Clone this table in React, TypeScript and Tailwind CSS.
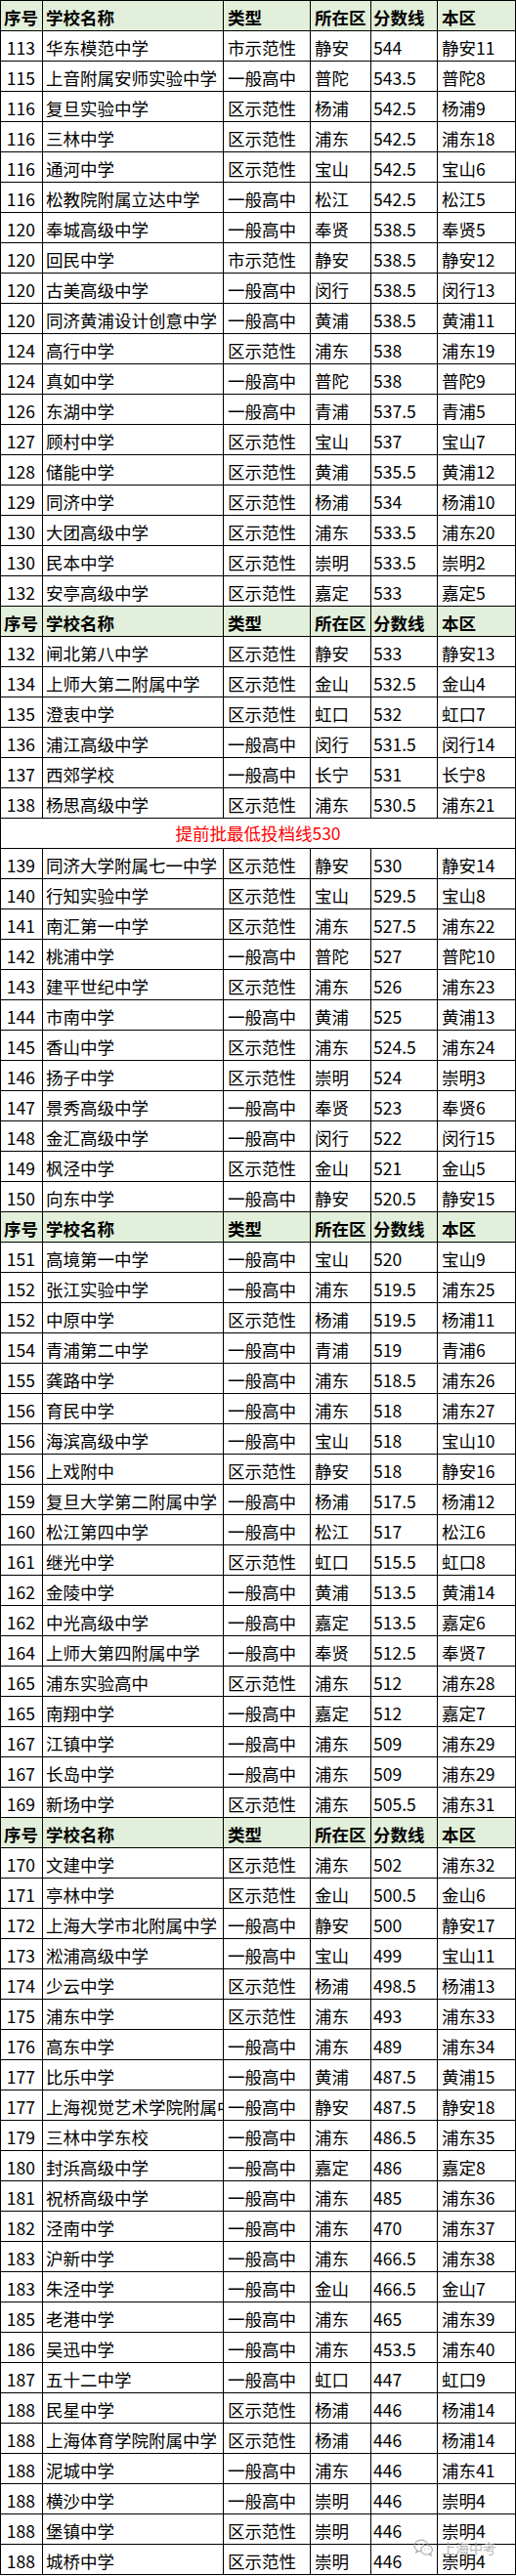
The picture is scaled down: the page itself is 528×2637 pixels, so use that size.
type Row = string[] | "H" | "B";

const rows: Row[] = [
  "H",
  ["113", "华东模范中学", "市示范性", "静安", "544", "静安11"],
  ["115", "上音附属安师实验中学", "一般高中", "普陀", "543.5", "普陀8"],
  ["116", "复旦实验中学", "区示范性", "杨浦", "542.5", "杨浦9"],
  ["116", "三林中学", "区示范性", "浦东", "542.5", "浦东18"],
  ["116", "通河中学", "区示范性", "宝山", "542.5", "宝山6"],
  ["116", "松教院附属立达中学", "一般高中", "松江", "542.5", "松江5"],
  ["120", "奉城高级中学", "一般高中", "奉贤", "538.5", "奉贤5"],
  ["120", "回民中学", "市示范性", "静安", "538.5", "静安12"],
  ["120", "古美高级中学", "一般高中", "闵行", "538.5", "闵行13"],
  ["120", "同济黄浦设计创意中学", "一般高中", "黄浦", "538.5", "黄浦11"],
  ["124", "高行中学", "区示范性", "浦东", "538", "浦东19"],
  ["124", "真如中学", "一般高中", "普陀", "538", "普陀9"],
  ["126", "东湖中学", "一般高中", "青浦", "537.5", "青浦5"],
  ["127", "顾村中学", "区示范性", "宝山", "537", "宝山7"],
  ["128", "储能中学", "区示范性", "黄浦", "535.5", "黄浦12"],
  ["129", "同济中学", "区示范性", "杨浦", "534", "杨浦10"],
  ["130", "大团高级中学", "区示范性", "浦东", "533.5", "浦东20"],
  ["130", "民本中学", "区示范性", "崇明", "533.5", "崇明2"],
  ["132", "安亭高级中学", "区示范性", "嘉定", "533", "嘉定5"],
  "H",
  ["132", "闸北第八中学", "区示范性", "静安", "533", "静安13"],
  ["134", "上师大第二附属中学", "区示范性", "金山", "532.5", "金山4"],
  ["135", "澄衷中学", "区示范性", "虹口", "532", "虹口7"],
  ["136", "浦江高级中学", "一般高中", "闵行", "531.5", "闵行14"],
  ["137", "西郊学校", "一般高中", "长宁", "531", "长宁8"],
  ["138", "杨思高级中学", "区示范性", "浦东", "530.5", "浦东21"],
  "B",
  ["139", "同济大学附属七一中学", "区示范性", "静安", "530", "静安14"],
  ["140", "行知实验中学", "区示范性", "宝山", "529.5", "宝山8"],
  ["141", "南汇第一中学", "区示范性", "浦东", "527.5", "浦东22"],
  ["142", "桃浦中学", "一般高中", "普陀", "527", "普陀10"],
  ["143", "建平世纪中学", "区示范性", "浦东", "526", "浦东23"],
  ["144", "市南中学", "一般高中", "黄浦", "525", "黄浦13"],
  ["145", "香山中学", "区示范性", "浦东", "524.5", "浦东24"],
  ["146", "扬子中学", "区示范性", "崇明", "524", "崇明3"],
  ["147", "景秀高级中学", "一般高中", "奉贤", "523", "奉贤6"],
  ["148", "金汇高级中学", "一般高中", "闵行", "522", "闵行15"],
  ["149", "枫泾中学", "区示范性", "金山", "521", "金山5"],
  ["150", "向东中学", "一般高中", "静安", "520.5", "静安15"],
  "H",
  ["151", "高境第一中学", "一般高中", "宝山", "520", "宝山9"],
  ["152", "张江实验中学", "一般高中", "浦东", "519.5", "浦东25"],
  ["152", "中原中学", "区示范性", "杨浦", "519.5", "杨浦11"],
  ["154", "青浦第二中学", "一般高中", "青浦", "519", "青浦6"],
  ["155", "龚路中学", "一般高中", "浦东", "518.5", "浦东26"],
  ["156", "育民中学", "一般高中", "浦东", "518", "浦东27"],
  ["156", "海滨高级中学", "一般高中", "宝山", "518", "宝山10"],
  ["156", "上戏附中", "区示范性", "静安", "518", "静安16"],
  ["159", "复旦大学第二附属中学", "一般高中", "杨浦", "517.5", "杨浦12"],
  ["160", "松江第四中学", "一般高中", "松江", "517", "松江6"],
  ["161", "继光中学", "区示范性", "虹口", "515.5", "虹口8"],
  ["162", "金陵中学", "一般高中", "黄浦", "513.5", "黄浦14"],
  ["162", "中光高级中学", "一般高中", "嘉定", "513.5", "嘉定6"],
  ["164", "上师大第四附属中学", "一般高中", "奉贤", "512.5", "奉贤7"],
  ["165", "浦东实验高中", "区示范性", "浦东", "512", "浦东28"],
  ["165", "南翔中学", "一般高中", "嘉定", "512", "嘉定7"],
  ["167", "江镇中学", "一般高中", "浦东", "509", "浦东29"],
  ["167", "长岛中学", "一般高中", "浦东", "509", "浦东29"],
  ["169", "新场中学", "区示范性", "浦东", "505.5", "浦东31"],
  "H",
  ["170", "文建中学", "区示范性", "浦东", "502", "浦东32"],
  ["171", "亭林中学", "区示范性", "金山", "500.5", "金山6"],
  ["172", "上海大学市北附属中学", "一般高中", "静安", "500", "静安17"],
  ["173", "淞浦高级中学", "一般高中", "宝山", "499", "宝山11"],
  ["174", "少云中学", "区示范性", "杨浦", "498.5", "杨浦13"],
  ["175", "浦东中学", "区示范性", "浦东", "493", "浦东33"],
  ["176", "高东中学", "一般高中", "浦东", "489", "浦东34"],
  ["177", "比乐中学", "一般高中", "黄浦", "487.5", "黄浦15"],
  ["177", "上海视觉艺术学院附属中学", "一般高中", "静安", "487.5", "静安18"],
  ["179", "三林中学东校", "一般高中", "浦东", "486.5", "浦东35"],
  ["180", "封浜高级中学", "一般高中", "嘉定", "486", "嘉定8"],
  ["181", "祝桥高级中学", "一般高中", "浦东", "485", "浦东36"],
  ["182", "泾南中学", "一般高中", "浦东", "470", "浦东37"],
  ["183", "沪新中学", "一般高中", "浦东", "466.5", "浦东38"],
  ["183", "朱泾中学", "一般高中", "金山", "466.5", "金山7"],
  ["185", "老港中学", "一般高中", "浦东", "465", "浦东39"],
  ["186", "吴迅中学", "一般高中", "浦东", "453.5", "浦东40"],
  ["187", "五十二中学", "一般高中", "虹口", "447", "虹口9"],
  ["188", "民星中学", "区示范性", "杨浦", "446", "杨浦14"],
  ["188", "上海体育学院附属中学", "区示范性", "杨浦", "446", "杨浦14"],
  ["188", "泥城中学", "一般高中", "浦东", "446", "浦东41"],
  ["188", "横沙中学", "一般高中", "崇明", "446", "崇明4"],
  ["188", "堡镇中学", "区示范性", "崇明", "446", "崇明4"],
  ["188", "城桥中学", "区示范性", "崇明", "446", "崇明4"],
];

const headers = ["序号", "学校名称", "类型", "所在区", "分数线", "本区"];

// left padding per column, first column is right-aligned
const pads = ["pr-[7px] justify-end", "pl-[3px]", "pl-[4px]", "pl-[4px]", "pl-[2px]", "pl-[4px]"];

const cell = "flex h-full items-center overflow-hidden whitespace-nowrap border-r border-b border-black pt-[3px]";
const grid = "grid h-[31px] grid-cols-[43px_185px_89px_62px_68px_80px]";

function WeChatMark() {
  return (
    <svg width="21" height="18" viewBox="0 0 21 18" fill="none" stroke="#9a9a9a" strokeWidth="1.2">
      <ellipse cx="8" cy="7" rx="7" ry="5.8" />
      <path d="M3.6 11.4 L2.8 14 L5.8 12.4" />
      <ellipse cx="13.6" cy="11.2" rx="5.8" ry="4.8" fill="white" />
      <path d="M17.4 14.6 L18.2 16.8 L15.6 15.6" />
      <circle cx="5.6" cy="5.6" r="0.8" fill="#9a9a9a" stroke="none" />
      <circle cx="10.2" cy="5.6" r="0.8" fill="#9a9a9a" stroke="none" />
      <circle cx="11.8" cy="10.4" r="0.6" fill="#9a9a9a" stroke="none" />
      <circle cx="15.6" cy="10.4" r="0.6" fill="#9a9a9a" stroke="none" />
    </svg>
  );
}

export default function App() {
  return (
    <div className="relative h-[2637px] w-[528px] bg-white font-['Noto_Sans_CJK_SC','Noto_Sans',sans-serif] text-[17.5px] leading-none text-black">
      <div className="border-l border-t border-black">
        {rows.map((r, idx) => {
          if (r === "H") {
            return (
              <div key={idx} className={`${grid} bg-[#e2efda] font-bold`}>
                {headers.map((h, i) => (
                  <div key={h} className={`${cell} ${i === 0 ? "pl-[3px]" : pads[i]}`}>
                    {h}
                  </div>
                ))}
              </div>
            );
          }
          if (r === "B") {
            return (
              <div key={idx} className="flex h-[31px] items-center justify-center border-r border-b border-black text-[#ff0000]">
                提前批最低投档线530
              </div>
            );
          }
          return (
            <div key={idx} className={grid}>
              {r.map((v, i) => (
                <div key={i} className={`${cell} ${pads[i]}`}>
                  {v}
                </div>
              ))}
            </div>
          );
        })}
      </div>

      <div className="absolute left-[423px] top-[2599px] flex items-center gap-[8px] opacity-80">
        <WeChatMark />
        <span className="text-[14px] text-[#a3a3a3]">上海中考</span>
      </div>
    </div>
  );
}
